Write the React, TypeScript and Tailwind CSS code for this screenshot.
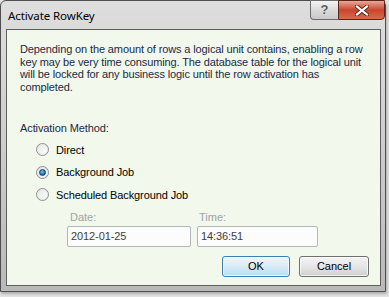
import React from 'react';

const uiFont = { fontFamily: '"Liberation Sans", Arial, sans-serif' };

type RadioProps = { label: string; checked?: boolean };

const Radio: React.FC<RadioProps> = ({ label, checked }) => (
  <div className="flex items-center h-[22.5px]">
    <span className="w-[13px] h-[13px] rounded-full border border-[#8f8f8f] bg-gradient-to-br from-[#d4d4d4] to-[#fafafa] flex items-center justify-center">
      <span className="w-[11px] h-[11px] rounded-full border border-[#e2e2e2] bg-gradient-to-br from-[#e9e9e9] to-[#fdfdfd] flex items-center justify-center">
        {checked && (
          <span className="w-[7px] h-[7px] rounded-full bg-[radial-gradient(circle_at_40%_35%,#7cc6f2_0%,#1f7bc4_55%,#0d4d8a_100%)] border border-[#0f3f6e]" />
        )}
      </span>
    </span>
    <span className="ml-[7px] text-[11px] text-black tracking-[-0.1px]">{label}</span>
  </div>
);

const TextBox: React.FC<{ value: string; width: string }> = ({ value, width }) => (
  <div
    className={`${width} h-[21px] rounded-[2px] border border-[#b3b6bb] bg-[#fcfcfc] flex items-center pl-[3px] text-[11px] text-[#3c3c3c] tracking-[-0.1px]`}
  >
    {value}
  </div>
);

export default function App() {
  return (
    <div className="w-[389px] h-[297px] bg-[#e4e4e4] overflow-hidden" style={uiFont}>
      <div className="w-[386px] h-[292px] rounded-t-[6px] border border-[#4e4e4e] bg-gradient-to-b from-[#dedede] via-[#cdcdcd] to-[#b9b9b9] flex flex-col pl-[5px] pr-[4px] pb-[5px] shadow-[1px_2px_3px_rgba(0,0,0,0.25)]">
        {/* title bar */}
        <div className="h-[28px] flex items-start justify-between">
          <span
            className="mt-[6px] ml-[2px] text-[11.5px] text-black tracking-[-0.1px]"
            style={{ fontFamily: '"Noto Sans", "Open Sans", sans-serif' }}
          >
            Activate RowKey
          </span>
          <div className="flex -mt-px mr-[-4px]">
            <div className="w-[28px] h-[20px] rounded-bl-[4px] border border-[#6b6b6b] border-r-0 bg-gradient-to-b from-[#f4f4f4] via-[#dadada] to-[#c9c9c9] flex items-center justify-center">
              <span className="text-[13px] font-bold text-[#5a5a5a] [text-shadow:0_0_1px_#fff]">?</span>
            </div>
            <div className="w-[47px] h-[20px] rounded-br-[4px] border border-[#5a2418] bg-gradient-to-b from-[#e7a898] via-[#c8452b] to-[#d96a4b] flex items-center justify-center">
              <svg width="14" height="11" viewBox="0 0 14 11">
                <path d="M2 1.5 L12 9.5 M12 1.5 L2 9.5" stroke="#5a2418" strokeWidth="4" strokeLinecap="square" />
                <path d="M2 1.5 L12 9.5 M12 1.5 L2 9.5" stroke="#ffffff" strokeWidth="2.2" strokeLinecap="square" />
              </svg>
            </div>
          </div>
        </div>

        {/* client area */}
        <div className="flex-1 border border-[#5f5f5f] bg-[#f2f8ec] flex flex-col pl-[13px] pr-[11px] pt-[13px] text-[#1b2a45]">
          <p className="text-[11px] leading-[12.5px] tracking-[-0.12px] whitespace-nowrap">
            Depending on the amount of rows a logical unit contains, enabling a row
            <br />
            key may be very time consuming. The database table for the logical unit
            <br />
            will be locked for any business logic until the row activation has
            <br />
            completed.
          </p>

          <div className="mt-[27px] text-[11px] tracking-[-0.1px]">Activation Method:</div>

          <div className="mt-[2px] ml-[16px] flex flex-col">
            <Radio label="Direct" />
            <Radio label="Background Job" checked />
            <Radio label="Scheduled Background Job" />
          </div>

          <div className="mt-[5px] ml-[47px] flex gap-[6px]">
            <div className="flex flex-col">
              <span className="ml-[3px] text-[11px] text-[#a3a3a3] leading-[13px]">Date:</span>
              <div className="mt-[2px]">
                <TextBox value="2012-01-25" width="w-[124px]" />
              </div>
            </div>
            <div className="flex flex-col">
              <span className="ml-[2px] text-[11px] text-[#a3a3a3] leading-[13px]">Time:</span>
              <div className="mt-[2px]">
                <TextBox value="14:36:51" width="w-[121px]" />
              </div>
            </div>
          </div>

          <div className="mt-[9px] flex justify-end gap-[9px]">
            <button className="w-[68px] h-[21px] rounded-[3px] border border-[#3c7fb1] bg-gradient-to-b from-[#eef7fd] via-[#d8ecf8] to-[#bcdcef] text-[11px] text-black shadow-[inset_0_0_0_1px_rgba(255,255,255,0.7)]">
              OK
            </button>
            <button className="w-[70px] h-[21px] rounded-[3px] border border-[#707070] bg-gradient-to-b from-[#f3f3f3] via-[#e6e6e6] to-[#d0d0d0] text-[11px] text-black shadow-[inset_0_0_0_1px_rgba(255,255,255,0.7)]">
              Cancel
            </button>
          </div>
        </div>
      </div>
    </div>
  );
}
